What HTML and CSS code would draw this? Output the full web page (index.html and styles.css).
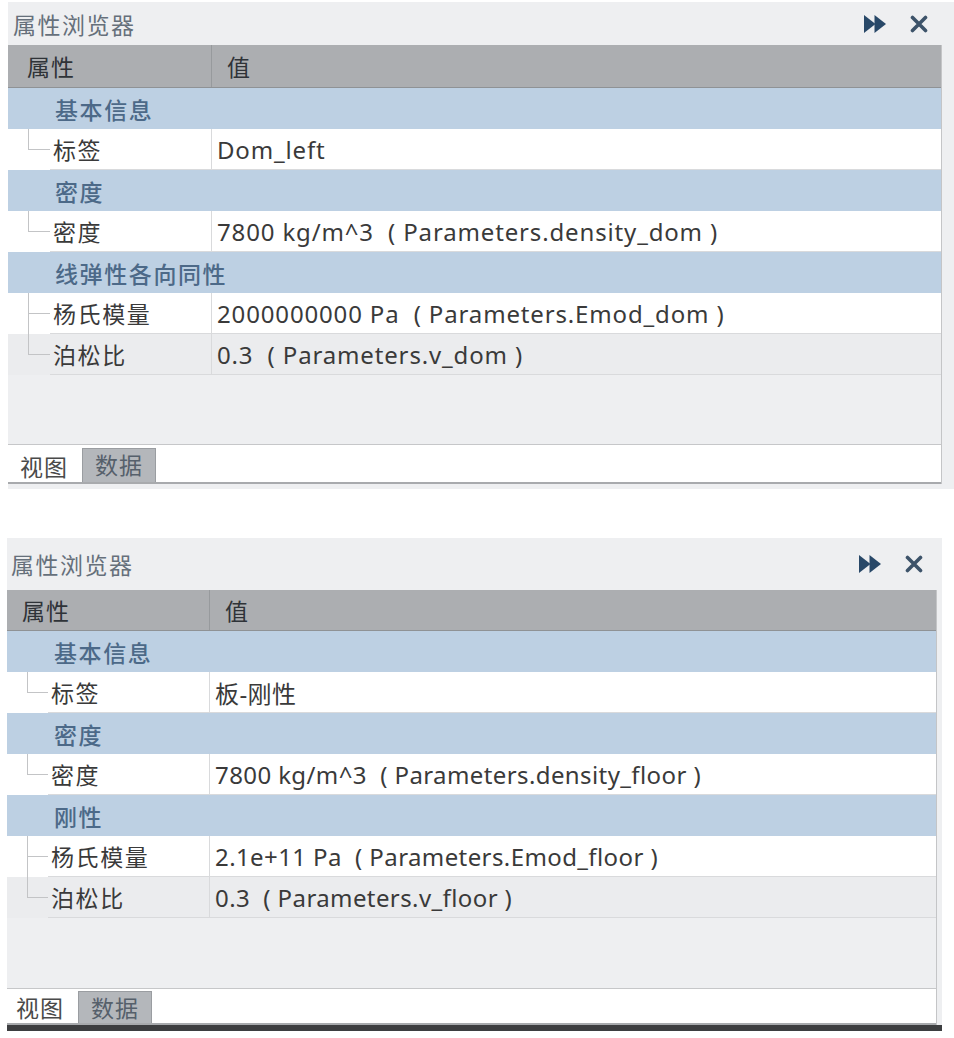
FILE: index.html
```html
<!DOCTYPE html>
<html lang="zh">
<head>
<meta charset="utf-8">
<title>属性浏览器</title>
<link rel="stylesheet" href="styles.css">
</head>
<body>
<div class="page">
  <section class="panel p1">
    <div class="titlebar">
      <span class="title">属性浏览器</span>
      <span class="tools">
        <svg class="ico-ff" width="23" height="18" viewBox="0 0 23 18"><polygon points="0,0 11.5,9 0,18" /><polygon points="10.5,0 22,9 10.5,18" /></svg>
        <svg class="ico-x" width="18" height="18" viewBox="0 0 18 18"><path d="M2.5 2.5 L15.5 15.5 M15.5 2.5 L2.5 15.5" /></svg>
      </span>
    </div>
    <div class="sheet">
      <div class="head"><div class="hname">属性</div><div class="hval">值</div></div>
      <div class="group">基本信息</div>
      <div class="row last"><span class="indent"><i class="twig"></i></span><div class="name">标签</div><div class="val">Dom_left</div></div>
      <div class="group">密度</div>
      <div class="row last"><span class="indent"><i class="twig"></i></span><div class="name">密度</div><div class="val">7800 kg/m^3 &nbsp;( Parameters.density_dom )</div></div>
      <div class="group">线弹性各向同性</div>
      <div class="row"><span class="indent"><i class="twig"></i></span><div class="name">杨氏模量</div><div class="val">2000000000 Pa &nbsp;( Parameters.Emod_dom )</div></div>
      <div class="row last alt"><span class="indent"><i class="twig"></i></span><div class="name">泊松比</div><div class="val">0.3 &nbsp;( Parameters.v_dom )</div></div>
      <div class="blank"></div>
      <div class="tabs"><span class="tab">视图</span><span class="tab active">数据</span></div>
    </div>
  </section>

  <section class="panel p2">
    <div class="titlebar">
      <span class="title">属性浏览器</span>
      <span class="tools">
        <svg class="ico-ff" width="23" height="18" viewBox="0 0 23 18"><polygon points="0,0 11.5,9 0,18" /><polygon points="10.5,0 22,9 10.5,18" /></svg>
        <svg class="ico-x" width="18" height="18" viewBox="0 0 18 18"><path d="M2.5 2.5 L15.5 15.5 M15.5 2.5 L2.5 15.5" /></svg>
      </span>
    </div>
    <div class="sheet">
      <div class="head"><div class="hname">属性</div><div class="hval">值</div></div>
      <div class="group">基本信息</div>
      <div class="row last"><span class="indent"><i class="twig"></i></span><div class="name">标签</div><div class="val">板-刚性</div></div>
      <div class="group">密度</div>
      <div class="row last"><span class="indent"><i class="twig"></i></span><div class="name">密度</div><div class="val">7800 kg/m^3 &nbsp;( Parameters.density_floor )</div></div>
      <div class="group">刚性</div>
      <div class="row"><span class="indent"><i class="twig"></i></span><div class="name">杨氏模量</div><div class="val">2.1e+11 Pa &nbsp;( Parameters.Emod_floor )</div></div>
      <div class="row last alt"><span class="indent"><i class="twig"></i></span><div class="name">泊松比</div><div class="val">0.3 &nbsp;( Parameters.v_floor )</div></div>
      <div class="blank"></div>
      <div class="tabs"><span class="tab">视图</span><span class="tab active">数据</span></div>
    </div>
    <div class="cutoff"></div>
  </section>
</div>
</body>
</html>
```

FILE: styles.css
```css
html, body {
  margin: 0;
  background: #ffffff;
}
body {
  font-family: "Noto Sans", "Noto Sans CJK SC", sans-serif;
  color: #333333;
}
.page {
  display: flex;
  flex-direction: column;
}
.panel {
  background: #eeeff1;
}
.p1 {
  margin: 2px 0 0 8px;
  width: 946px;
  padding-bottom: 5px;
}
.p2 {
  margin: 49px 0 0 7px;
  width: 935px;
  background: linear-gradient(#eeeff1, #eeeff1) top left / 100% calc(100% - 6px) no-repeat;
}
.titlebar {
  display: flex;
  align-items: center;
  justify-content: space-between;
}
.p1 .titlebar { height: 43px; }
.p2 .titlebar { height: 52px; }
.title {
  font-family: "Noto Sans CJK SC", sans-serif;
  font-size: 23px;
  color: #66707b;
  padding-left: 5px;
  letter-spacing: 1.5px;
}
.p2 .title { padding-left: 4px; }
.tools {
  display: flex;
  align-items: center;
  gap: 23px;
}
.p1 .tools { padding-right: 26px; }
.p2 .tools { padding-right: 19px; }
.ico-ff polygon { fill: #284868; }
.ico-x path {
  stroke: #3d536a;
  stroke-width: 3.6;
  stroke-linecap: round;
  fill: none;
}
.sheet {
  border-right: 1px solid #c4c5c7;
}
.p1 .sheet { width: 933px; }
.p2 .sheet { width: 929px; }

.head {
  display: grid;
  grid-template-columns: 204px 1fr;
  height: 42px;
  background: #acaeb1;
  border-bottom: 1px solid #8f9295;
  font-family: "Noto Sans CJK SC", sans-serif;
  font-size: 23px;
  color: #2f3338;
  letter-spacing: 1px;
}
.p2 .head { height: 40px; grid-template-columns: 203px 1fr; }
.hname {
  display: flex;
  align-items: center;
  padding-left: 19px;
  border-right: 1px solid #979a9d;
}
.p2 .hname { padding-left: 15px; }
.hval {
  display: flex;
  align-items: center;
  padding-left: 15px;
}
.group {
  display: flex;
  align-items: center;
  height: 41px;
  background: #bdd0e3;
  padding-left: 47px;
  font-family: "Noto Sans CJK SC", sans-serif;
  font-size: 23px;
  font-weight: 500;
  color: #4c6988;
  letter-spacing: 1.6px;
}
.row {
  display: grid;
  grid-template-columns: 42px 162px 1fr;
  height: 41px;
  background: #ffffff;
}
.p2 .row { grid-template-columns: 41px 162px 1fr; }
.row.alt { background: #ebecee; }
.indent {
  display: flex;
}
.twig {
  display: block;
  margin-left: 20px;
  width: 22px;
  background:
    linear-gradient(#c3c4c6, #c3c4c6) left top / 1px 100% no-repeat,
    linear-gradient(#c3c4c6, #c3c4c6) left 50% / 100% 1px no-repeat;
}
.row.last .twig {
  background:
    linear-gradient(#c3c4c6, #c3c4c6) left top / 1px 50% no-repeat,
    linear-gradient(#c3c4c6, #c3c4c6) left 50% / 100% 1px no-repeat;
}
.name {
  display: flex;
  align-items: center;
  padding-left: 3px;
  border-right: 1px solid #d9dadc;
  border-bottom: 1px solid #d9dadc;
  font-family: "Noto Sans CJK SC", sans-serif;
  font-size: 23px;
  color: #3a3a3a;
  letter-spacing: 1.6px;
}
.val {
  display: flex;
  align-items: center;
  padding-left: 5px;
  border-bottom: 1px solid #d9dadc;
  color: #3a3a3a;
  font-size: 24px;
  letter-spacing: 0.85px;
  white-space: pre;
}
.p2 .val { letter-spacing: 0.4px; }
.blank {
  height: 69px;
  border-bottom: 1px solid #c6c7c9;
}
.p2 .blank { height: 70px; }
.tabs {
  display: flex;
  align-items: flex-end;
  height: 37px;
  background: #ffffff;
  border-bottom: 2px solid #a8aaad;
  padding-left: 12px;
  gap: 14px;
}
.p2 .tabs { height: 34px; padding-left: 9px; }
.tab {
  font-family: "Noto Sans CJK SC", sans-serif;
  font-size: 23px;
  color: #4a4a4a;
  line-height: 31px;
  letter-spacing: 1px;
}
.tab.active {
  background: #b4b7bb;
  border: 1px solid #9a9da1;
  border-bottom: none;
  color: #56606b;
  padding: 0 12px;
  height: 33px;
}
.p2 .tab.active { height: 31px; line-height: 30px; }
.cutoff {
  height: 6px;
  width: 935px;
  background: #3d3e40;
}
```
